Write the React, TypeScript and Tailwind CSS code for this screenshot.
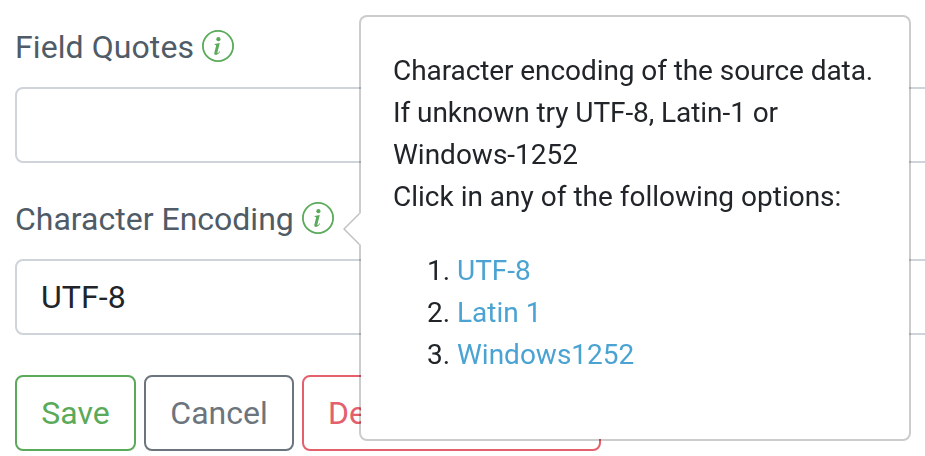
import type { ReactNode } from 'react';

function InfoIcon() {
  return (
    <svg className="-mt-0.5 h-8 w-8 shrink-0" viewBox="0 0 32 32" fill="none" aria-hidden="true">
      <circle cx="16" cy="16" r="15.1" stroke="#5aaa5a" strokeWidth="1.8" />
      <circle cx="16.4" cy="9.2" r="2.1" fill="#5aaa5a" />
      <path
        d="M12.6 14 L17.8 13.1 L15.5 22 Q15.2 23.4 15.8 23.2 Q16.5 22.8 17.6 21.3 L18.2 21.8 Q16.2 25 14 25 Q11.8 25 12.4 22.6 L14.1 15.8 Q14.3 14.8 12.6 14.8 Z"
        fill="#5aaa5a"
      />
    </svg>
  );
}

function Label({ children }: { children: ReactNode }) {
  return (
    <label className="mb-4 flex h-12 items-center gap-2 text-[32px] leading-[48px] text-[#4f5b67]">
      {children}
      <InfoIcon />
    </label>
  );
}

function Field({ label, value }: { label: ReactNode; value: string }) {
  return (
    <div>
      <Label>{label}</Label>
      <div className="flex h-[76px] items-center rounded-lg border-2 border-[#ced4da] px-6 text-[32px] leading-[48px] tracking-[0.1px] text-[#212529]">
        {value}
      </div>
    </div>
  );
}

const options = ['UTF-8', 'Latin 1', 'Windows1252'];

function Popover() {
  return (
    <div className="absolute top-[15px] left-[359px] h-[426px] w-[552px] rounded-lg border-2 border-black/20 bg-white bg-clip-padding px-8 pt-[33px] text-[28px] leading-[42px] text-[#212529] will-change-transform">
      <svg className="absolute top-[196px] -left-[18px] h-8 w-[18px]" viewBox="0 0 18 32" aria-hidden="true">
        <path d="M16 0 L0 16 L16 32 Z" fill="#000" fillOpacity="0.25" />
        <path d="M18 0 L2 16 L18 32 Z" fill="#fff" />
      </svg>
      <p className="whitespace-nowrap">
        <span className="tracking-[-0.08px]">Character encoding of the source data.</span>
        <br />
        <span className="tracking-[-0.07px]">If unknown try UTF-8, Latin-1 or</span>
        <br />
        Windows-1252
        <br />
        Click in any of the following options:
      </p>
      <ol className="mt-8 ml-16 list-decimal">
        {options.map((option) => (
          <li key={option}>
            <a className="text-[#4aa3d2]">{option}</a>
          </li>
        ))}
      </ol>
    </div>
  );
}

export default function App() {
  return (
    <div className="relative h-[456px] w-[925px] overflow-hidden bg-white font-['Roboto',sans-serif]">
      <div className="flex w-[960px] flex-col gap-8 pt-[23px] pl-[15px]">
        <Field label={<span className="tracking-[0.08px]">Field Quotes</span>} value="" />
        <Field label={<span>Character Encoding</span>} value="UTF-8" />
      </div>
      <div className="mt-10 flex gap-2 pl-[15px] text-[32px] leading-[48px]">
        <button className="h-[76px] w-[121px] rounded-lg border-2 border-[#5aaa5a] text-[#5aaa5a]">Save</button>
        <button className="h-[76px] w-[150px] rounded-lg border-2 border-[#6c757d] text-[#6c757d]">Cancel</button>
        <button className="h-[76px] w-[299px] rounded-lg border-2 border-[#e4606d] px-6 text-left whitespace-nowrap text-[#e4606d]">
          Delete
        </button>
      </div>
      <Popover />
    </div>
  );
}
